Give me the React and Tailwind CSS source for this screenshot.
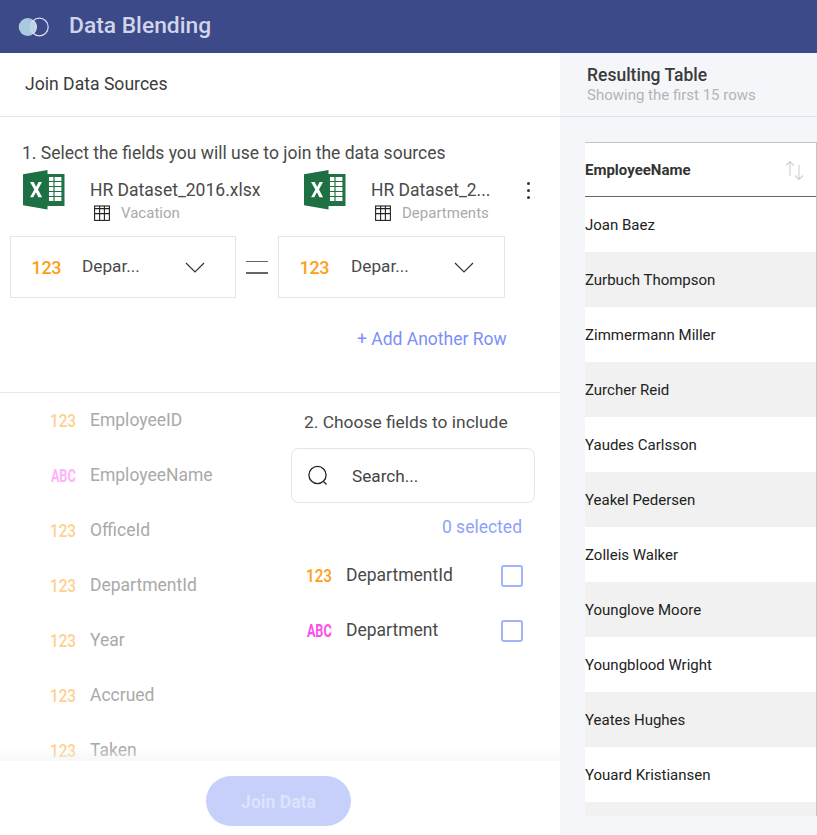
import React from "react";

function BlendLogo() {
  return (
    <svg width="32" height="20" viewBox="0 0 32 20" className="block">
      <circle cx="9.7" cy="10" r="9" fill="#a9c9de" />
      <circle cx="21.4" cy="10" r="8.8" fill="none" stroke="#d8deef" strokeWidth="1.2" />
      <path d="M15.5 3.4a9 9 0 0 1 0 13.2a9 9 0 0 1 0-13.2z" fill="#bdd3e4" />
      <path d="M15.5 3.4a9 9 0 0 1 0 13.2" fill="none" stroke="#e3e8f3" strokeWidth="1" />
    </svg>
  );
}

function ExcelIcon() {
  return (
    <svg width="42" height="40" viewBox="0 0 42 40" className="block shrink-0">
      <rect x="22" y="4" width="19.5" height="32" fill="#217346" />
      <g fill="#fff">
        {[7, 12, 17, 22, 27].map((y) => (
          <g key={y}>
            <rect x="26" y={y} width="4.4" height="4" />
            <rect x="31.6" y={y} width="6.8" height="4" />
          </g>
        ))}
      </g>
      <path d="M0 4.2 24.5 0v39.5L0 35.3z" fill="#1d7044" />
      <path d="M7 12h3.7l2.4 4.8 2.5-4.8h3.4l-4 7.4 4.1 7.8h-3.7l-2.5-5-2.6 5H7.1l4.2-7.7z" fill="#fff" />
    </svg>
  );
}

function TableIcon() {
  return (
    <svg width="16" height="16" viewBox="0 0 16 16" className="block shrink-0" fill="none" stroke="#222" strokeWidth="1.1">
      <rect x="0.6" y="1" width="14.8" height="14.4" />
      <path d="M0.6 3.6h14.8M0.6 8.6h14.8M5.6 1v14.4M10.4 1v14.4" />
    </svg>
  );
}

function Chevron() {
  return (
    <svg width="20" height="11" viewBox="0 0 20 11" fill="none" stroke="#333" strokeWidth="1.2" className="block shrink-0 mr-[30px]">
      <path d="M1 1l9 9 9-9" />
    </svg>
  );
}

function TypeTag({ type, faded }) {
  const isNum = type === "123";
  const colour = isNum ? (faded ? "text-[#ffd08f]" : "text-[#ff9e18]") : faded ? "text-[#ffb3fa]" : "text-[#f850ec]";
  return (
    <span className={`inline-block w-[26px] text-center text-[18px] leading-none mt-[1px] whitespace-nowrap ${isNum ? "font-medium scale-x-[0.85]" : "font-bold scale-x-[0.7] -translate-x-[1px]"} ${colour}`}>
      {type}
    </span>
  );
}

function Select({ className = "", labelClass = "" }) {
  return (
    <div className={`h-[62px] border border-[#e5e5e5] flex items-center ${className}`}>
      <span className="w-[71px] shrink-0 pl-[20.5px] text-[18px] font-medium text-[#ff9e18] tracking-[-0.3px]">123</span>
      <span className={`text-[17.2px] text-[#4a4a4a] flex-1 ${labelClass}`}>Depar...</span>
      <Chevron />
    </div>
  );
}

function Source({ name, table, className = "" }) {
  return (
    <div className={`flex items-start ${className}`}>
      <ExcelIcon />
      <div className="ml-[25px] pt-[1px]">
        <div className="text-[17.5px] leading-[20px] text-[#4a4a4a] mt-[9px]">{name}</div>
        <div className="flex items-center mt-[4px] ml-[4px]">
          <TableIcon />
          <span className="ml-[11px] text-[15px] leading-[18px] text-[#aaaaaa]">{table}</span>
        </div>
      </div>
    </div>
  );
}

const leftFields = [
  ["123", "EmployeeID"],
  ["ABC", "EmployeeName"],
  ["123", "OfficeId"],
  ["123", "DepartmentId"],
  ["123", "Year"],
  ["123", "Accrued"],
  ["123", "Taken"],
];

const rows = [
  "Joan Baez",
  "Zurbuch Thompson",
  "Zimmermann Miller",
  "Zurcher Reid",
  "Yaudes Carlsson",
  "Yeakel Pedersen",
  "Zolleis Walker",
  "Younglove Moore",
  "Youngblood Wright",
  "Yeates Hughes",
  "Youard Kristiansen",
  "",
];

export default function App() {
  return (
    <div className="w-[817px] h-[835px] overflow-hidden flex flex-col bg-white [font-family:Roboto,sans-serif]">
      <header className="h-[53px] shrink-0 bg-[#3d4a8a] flex items-center pl-[18px]">
        <BlendLogo />
        <span className="ml-[19px] text-[22.8px] font-medium text-[#d0d5e9]">Data Blending</span>
      </header>
      <div className="flex flex-1 min-h-0">
        <div className="w-[560px] shrink-0 flex flex-col">
          <div className="h-[64px] shrink-0 border-b border-[#e3e3e3] flex items-center pl-[25px] text-[17.6px] text-[#3b3b3b]">
            Join Data Sources
          </div>
          <div className="h-[276px] shrink-0 border-b border-[#e8e8e8] flex flex-col">
            <div className="pl-[22px] pt-[26px] text-[17.5px] leading-[20px] text-[#4a4a4a]">
              1. Select the fields you will use to join the data sources
            </div>
            <div className="flex items-start pl-[23px] mt-[7px] relative">
              <Source name="HR Dataset_2016.xlsx" table="Vacation" className="w-[281px]" />
              <Source name="HR Dataset_2..." table="Departments" />
              <div className="absolute left-[527px] top-[12px] flex flex-col gap-[4px]">
                <span className="block w-[3px] h-[3px] rounded-full bg-[#333]" />
                <span className="block w-[3px] h-[3px] rounded-full bg-[#333]" />
                <span className="block w-[3px] h-[3px] rounded-full bg-[#333]" />
              </div>
            </div>
            <div className="flex items-center pl-[10px] mt-[14px]">
              <Select className="w-[226px]" />
              <div className="w-[42px] flex flex-col items-center gap-[10px]">
                <span className="block w-[22px] h-[1.5px] bg-[#666]" />
                <span className="block w-[22px] h-[1.5px] bg-[#666]" />
              </div>
              <Select className="w-[227px]" labelClass="ml-px" />
            </div>
            <div className="text-[17.5px] text-[#7b90f7] pl-[357px] mt-[30px] leading-[22px]">+ Add Another Row</div>
          </div>
          <div className="flex flex-1 min-h-0 relative overflow-hidden">
            <div className="w-[291px] shrink-0 pl-[48px]">
              {leftFields.map(([t, n]) => (
                <div key={n} className="h-[55px] flex items-center">
                  <TypeTag type={t} faded />
                  <span className="ml-[16px] text-[17.5px] text-[#a9a9a9]">{n}</span>
                </div>
              ))}
            </div>
            <div className="w-[244px] flex flex-col">
              <div className="pl-[13px] pt-[18px] text-[17.4px] leading-[22px] text-[#4a4a4a]">2. Choose fields to include</div>
              <div className="mt-[15px] h-[55px] border border-[#e5e5e5] rounded-[8px] flex items-center pl-[15px]">
                <svg width="22" height="22" viewBox="0 0 22 22" fill="none" stroke="#222" strokeWidth="1.3">
                  <circle cx="10.5" cy="10" r="8.6" />
                  <path d="M16.5 16.5l3 3" />
                </svg>
                <span className="ml-[23px] mt-[3px] text-[17.2px] text-[#444]">Search...</span>
              </div>
              <div className="mt-[14px] pr-[13px] text-right text-[17.5px] leading-[20px] text-[#8ea2f8]">0 selected</div>
              <div className="mt-[11px]">
                {["123", "ABC"].map((t) => (
                  <div key={t} className="h-[55px] flex items-center pl-[13px]">
                    <TypeTag type={t} />
                    <span className="ml-[16px] text-[17.5px] text-[#4a4a4a] flex-1">{t === "123" ? "DepartmentId" : "Department"}</span>
                    <span className="w-[22px] h-[22px] mr-[12px] border-2 border-[#a3b3f9] rounded-[3px]" />
                  </div>
                ))}
              </div>
            </div>
            <div className="absolute left-0 right-0 bottom-0 h-[14px] bg-gradient-to-b from-transparent to-[#f2f2f3]/60" />
          </div>
          <div className="h-[74px] shrink-0 flex items-start justify-center pt-[15px] pr-[3px]">
            <div className="w-[145px] h-[50px] pt-[2px] rounded-full bg-[#c6d0fb] flex items-center justify-center text-[17.6px] font-bold text-[#dde3fc]">
              Join Data
            </div>
          </div>
        </div>
        <div className="flex-1 min-w-0 bg-[#f5f6fa] flex flex-col">
          <div className="h-[64px] shrink-0 border-b border-[#e3e4ea] pl-[27px] pt-[12px]">
            <div className="text-[17.5px] leading-[20px] font-medium text-[#3b3b3b]">Resulting Table</div>
            <div className="text-[15px] leading-[20px] text-[#b4b4b4]">Showing the first 15 rows</div>
          </div>
          <div className="ml-[25px] mt-[25px] h-[674px] bg-white border-t border-r border-[#c4c4c4] overflow-hidden">
            <div className="h-[54px] border-b border-[#666] flex items-center justify-between pr-[11px]">
              <span className="mt-[2px] text-[15px] font-bold text-[#333]">EmployeeName</span>
              <svg width="20" height="20" viewBox="0 0 20 20" fill="none" stroke="#cfcfcf" strokeWidth="1.1">
                <path d="M5 16V1.5M1 5.5l4-4 4 4M14 5v14.5M10 15.5l4 4 4-4" />
              </svg>
            </div>
            {rows.map((r, i) => (
              <div key={i} className={`h-[55px] flex items-center pt-[2px] text-[15px] text-[#222] ${i % 2 ? "bg-[#f1f1f1]" : "bg-white"}`}>
                {r}
              </div>
            ))}
          </div>
        </div>
      </div>
    </div>
  );
}
